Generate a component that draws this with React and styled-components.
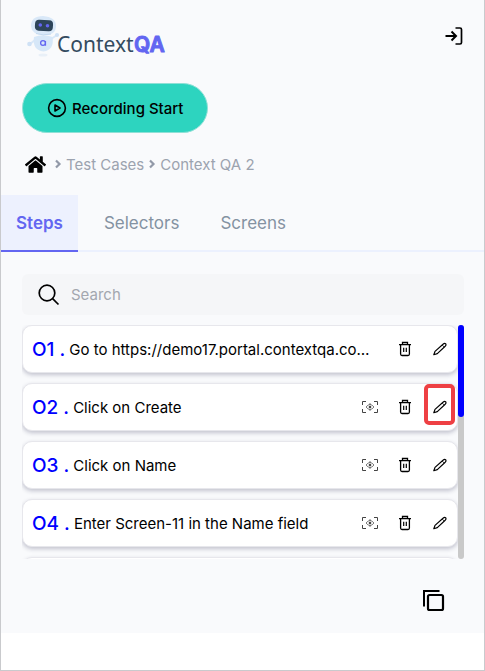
import React, { useState } from "react";
import styled, { createGlobalStyle, css } from "styled-components";
import { FaHome } from "react-icons/fa";

const Global = createGlobalStyle`
  *, *::before, *::after { box-sizing: border-box; }
  body { margin: 0; background: #fff; font-family: Inter, "Liberation Sans", sans-serif; color: #000; }
  button, input { font: inherit; color: inherit; }
`;

const Page = styled.div`
  min-height: 100vh;
  border: solid #c9cacd;
  border-width: 0 1px 1px;
  background: #fff;
`;

const Panel = styled.main`
  display: flex;
  flex-direction: column;
  padding-bottom: 20px;
  background: #f9fafc;
`;

const Header = styled.header`
  display: flex;
  align-items: flex-start;
  justify-content: space-between;
  height: 83px;
  padding: 14px 18px 0 21px;
`;

const PlainButton = styled.button`
  display: flex;
  align-items: center;
  justify-content: center;
  padding: 0;
  border: 0;
  background: none;
  cursor: pointer;
`;

const HeaderButton = styled(PlainButton)`
  width: 24px;
  height: 24px;
  margin-top: 10px;
`;

const RecordButton = styled.button`
  display: flex;
  align-items: center;
  justify-content: center;
  gap: 5px;
  align-self: flex-start;
  height: 50px;
  margin-left: 21px;
  padding: 0 24px;
  border: 1px solid #8fe0d6;
  border-radius: 25px;
  background: #2dd4bf;
  font-size: 15px;
  font-weight: 500;
  cursor: pointer;
`;

const Breadcrumb = styled.nav`
  display: flex;
  align-items: center;
  gap: 4px;
  height: 62px;
  padding-left: 24px;
  font-size: 15px;
  color: #9ca3af;
`;

const Crumb = styled.a`
  color: inherit;
  text-decoration: none;
`;

const HomeLink = styled.a`
  display: flex;
  margin-right: 4px;
  color: #000;
`;

const Tabs = styled.div`
  display: flex;
  gap: 11px;
  height: 57px;
  border-bottom: 2px solid #ecf1fe;
`;

const Tab = styled.button`
  height: 57px;
  padding: 0 15px;
  border: 0;
  border-bottom: 2px solid transparent;
  background: none;
  color: #8492a2;
  font-size: 17px;
  cursor: pointer;
  ${(p) =>
    p.$active &&
    css`
      border-color: #6366f1;
      background: #edf1fe;
      color: #6366f1;
      font-weight: 600;
    `}
`;

const Content = styled.section`
  display: flex;
  flex-direction: column;
  gap: 10px;
  padding: 22px 20px 0 21px;
`;

const SearchBox = styled.label`
  display: flex;
  align-items: center;
  gap: 10px;
  height: 41px;
  padding: 0 15px;
  border-radius: 6px;
  background: #f5f6f8;
`;

const SearchInput = styled.input`
  flex: 1;
  min-width: 0;
  padding: 0;
  border: 0;
  outline: 0;
  background: none;
  font-size: 15px;
  &::placeholder { color: #a3a7af; opacity: 1; }
`;

const ListArea = styled.div`
  display: flex;
  height: 234px;
`;

const StepList = styled.ul`
  flex: 1;
  min-width: 0;
  margin: 0;
  padding: 0;
  list-style: none;
  overflow-y: auto;
  scrollbar-width: none;
`;

const StepRow = styled.li`
  display: flex;
  align-items: center;
  height: 48px;
  margin-bottom: 10px;
  padding: 0 6px 0 9px;
  border: 1px solid #e7e7ec;
  border-radius: 10px;
  background: #fff;
  box-shadow: 0 2px 4px rgba(30, 30, 70, 0.25);
`;

const StepNumber = styled.span`
  margin-right: 4px;
  color: #0000ff;
  font-size: 19px;
  font-weight: 500;
  white-space: nowrap;
`;

const StepText = styled.span`
  flex: 0 1 306px;
  min-width: 0;
  overflow: hidden;
  text-overflow: ellipsis;
  white-space: nowrap;
  font-size: 15px;
`;

const Actions = styled.div`
  display: flex;
  flex: none;
  gap: 13px;
  margin-left: auto;
`;

const ActionButton = styled(PlainButton)`
  position: relative;
  width: 22px;
  height: 22px;
  ${(p) =>
    p.$highlighted &&
    css`
      &::after {
        content: "";
        position: absolute;
        inset: -12px -4px -7px -5px;
        border: 4px solid #ee4044;
        border-radius: 5px;
      }
    `}
`;

const ScrollTrack = styled.div`
  width: 6px;
  border-radius: 3px;
  background: #c9c9c9;
`;

const ScrollThumb = styled.div`
  height: 92px;
  border-radius: 3px;
  background: #0000ff;
`;

const Footer = styled.footer`
  display: flex;
  justify-content: flex-end;
  padding: 29px 38px 0 0;
`;

const FooterButton = styled(PlainButton)`
  width: 25px;
  height: 25px;
`;

function Logo() {
  return (
    <svg width="146" height="44" viewBox="22 14 146 44" role="img" aria-label="ContextQA">
      <ellipse cx="43" cy="55" rx="4.5" ry="1.5" fill="#e9f0f8" />
      <path d="M35 40 L30 44 M51 39 L57 35" stroke="#d9e8f8" strokeWidth="2" />
      <circle cx="29.500" cy="44" r="2.300" fill="#cfe1f5" />
      <circle cx="57" cy="35" r="2.100" fill="#cfe1f5" />
      <path d="M34 37 Q43 33.500 52.500 37 Q54.500 50 43.500 51.500 Q32 50 34 37Z" fill="#d6e7f8" />
      <path d="M31 26 Q31 16 43 16 Q56 17 56 26 Q56 35.500 43.500 35 Q31.500 34.500 31 26Z" fill="#d9e8f8" />
      <path d="M36 33.500 Q43 36 51 34" stroke="#c3d9ef" fill="none" />
      <rect x="35" y="20" width="18" height="11" rx="4" fill="#2d4459" transform="rotate(4 44 25)" />
      <circle cx="40.300" cy="25" r="1.800" fill="#6366f1" />
      <circle cx="47.500" cy="25.700" r="1.800" fill="#6366f1" />
      <circle cx="43" cy="43" r="2.400" fill="none" stroke="#6366f1" strokeWidth="1.300" />
      <path d="M45.500 41 V45.700" stroke="#6366f1" strokeWidth="1.200" />
      <text x="57" y="52" fontFamily="Noto Sans, sans-serif" fontSize="21" fill="#344b60">Context</text>
      <text x="134" y="52" fontFamily="Inter, sans-serif" fontSize="21" fontWeight="600" fill="#6366f1" stroke="#6366f1" strokeWidth="1" strokeLinejoin="round">QA</text>
    </svg>
  );
}

const ExitIcon = () => (
  <svg width="20" height="20" viewBox="0 0 20 20" fill="none" stroke="#000" strokeWidth="2">
    <path d="M1.500 10 H11 M7.500 5.500 L12 10 L7.500 14.500" />
    <path d="M11.500 2 H16 Q17.500 2 17.500 3.500 V16.500 Q17.500 18 16 18 H11.500" strokeWidth="1.700" />
  </svg>
);

const PlayIcon = () => (
  <svg width="20" height="20" viewBox="0 0 20 20" fill="none" stroke="#000" strokeWidth="1.600" strokeLinejoin="round">
    <circle cx="10" cy="10" r="8.400" />
    <path d="M8 7 L13 10 L8 13Z" />
  </svg>
);

const Chevron = () => (
  <svg width="8" height="10" viewBox="0 0 8 10" fill="none" stroke="#9299a8" strokeWidth="2.200">
    <path d="M2 1.500 L5.500 5 L2 8.500" />
  </svg>
);

const SearchIcon = () => (
  <svg width="24" height="24" viewBox="0 0 24 24" fill="none" stroke="#000" strokeWidth="1.700">
    <circle cx="10" cy="10" r="7.800" />
    <path d="M15.600 15.600 L21.500 21.500" />
  </svg>
);

const TargetIcon = () => (
  <svg width="16" height="12" viewBox="0 0 16 12" fill="none" stroke="#444" strokeWidth="1">
    <path d="M4 .5 H.5 V4 M12 .5 H15.500 V4 M.5 8 V11.500 H4 M15.500 8 V11.500 H12" />
    <path d="M4 6 Q8 1 12 6 Q8 11 4 6Z" strokeWidth=".7" />
    <circle cx="8" cy="6" r="1.300" fill="#444" stroke="none" />
    <path d="M8 2 V4 M8 8 V10" strokeWidth=".7" />
  </svg>
);

const TrashIcon = () => (
  <svg width="14" height="16" viewBox="0 0 14 16" fill="none" stroke="#000" strokeWidth="1.300">
    <path d="M1 3.700 H13 M4.500 3.500 V1.500 H9.500 V3.500" />
    <path d="M2.600 4 V13 Q2.600 14.500 4 14.500 H10 Q11.400 14.500 11.400 13 V4" />
    <path d="M5.700 6.700 V11 M8.300 6.700 V11" strokeWidth="1.200" />
  </svg>
);

const PencilIcon = () => (
  <svg width="14" height="14" viewBox="0 0 14 14" fill="none" stroke="#000" strokeWidth="1.200" strokeLinejoin="round">
    <path d="M.8 12.700 L2 9.400 L10 2.200 Q11.500 1 12.600 1.700 Q13.500 2.800 12.200 4.200 L4.300 11.600Z" />
    <path d="M9.200 3 L11.200 5" strokeWidth=".8" />
  </svg>
);

const CopyIcon = () => (
  <svg width="23" height="23" viewBox="0 0 23 23" fill="none" stroke="#000" strokeWidth="2.200">
    <rect x="6" y="6" width="15" height="15" rx="1.500" />
    <path d="M2 17.500 V2 H17.500" strokeWidth="2" />
  </svg>
);

const steps = [
  { n: 1, text: "Go to https://demo17.portal.contextqa.com/login" },
  { n: 2, text: "Click on Create", target: true, highlighted: true },
  { n: 3, text: "Click on Name", target: true },
  { n: 4, text: "Enter Screen-11 in the Name field", target: true },
];

const tabs = ["Steps", "Selectors", "Screens"];

export default function App() {
  const [active, setActive] = useState("Steps");
  return (
    <Page>
      <Global />
      <Panel>
        <Header>
          <Logo />
          <HeaderButton aria-label="Log out"><ExitIcon /></HeaderButton>
        </Header>
        <RecordButton><PlayIcon />Recording Start</RecordButton>
        <Breadcrumb aria-label="Breadcrumb">
          <HomeLink href="#" aria-label="Home"><FaHome size={21} /></HomeLink>
          <Chevron />
          <Crumb href="#">Test Cases</Crumb>
          <Chevron />
          <Crumb href="#">Context QA 2</Crumb>
        </Breadcrumb>
        <Tabs role="tablist">
          {tabs.map((t) => (
            <Tab key={t} role="tab" aria-selected={t === active} $active={t === active} onClick={() => setActive(t)}>
              {t}
            </Tab>
          ))}
        </Tabs>
        <Content>
          <SearchBox>
            <SearchIcon />
            <SearchInput type="text" placeholder="Search" aria-label="Search" />
          </SearchBox>
          <ListArea>
            <StepList>
              {steps.map((s) => (
                <StepRow key={s.n}>
                  <StepNumber>O{s.n} .</StepNumber>
                  <StepText>{s.text}</StepText>
                  <Actions>
                    {s.target && <ActionButton aria-label="Show element"><TargetIcon /></ActionButton>}
                    <ActionButton aria-label="Delete step"><TrashIcon /></ActionButton>
                    <ActionButton aria-label="Edit step" $highlighted={s.highlighted}><PencilIcon /></ActionButton>
                  </Actions>
                </StepRow>
              ))}
              <StepRow aria-hidden="true" />
            </StepList>
            <ScrollTrack><ScrollThumb /></ScrollTrack>
          </ListArea>
        </Content>
        <Footer>
          <FooterButton aria-label="Copy"><CopyIcon /></FooterButton>
        </Footer>
      </Panel>
    </Page>
  );
}
